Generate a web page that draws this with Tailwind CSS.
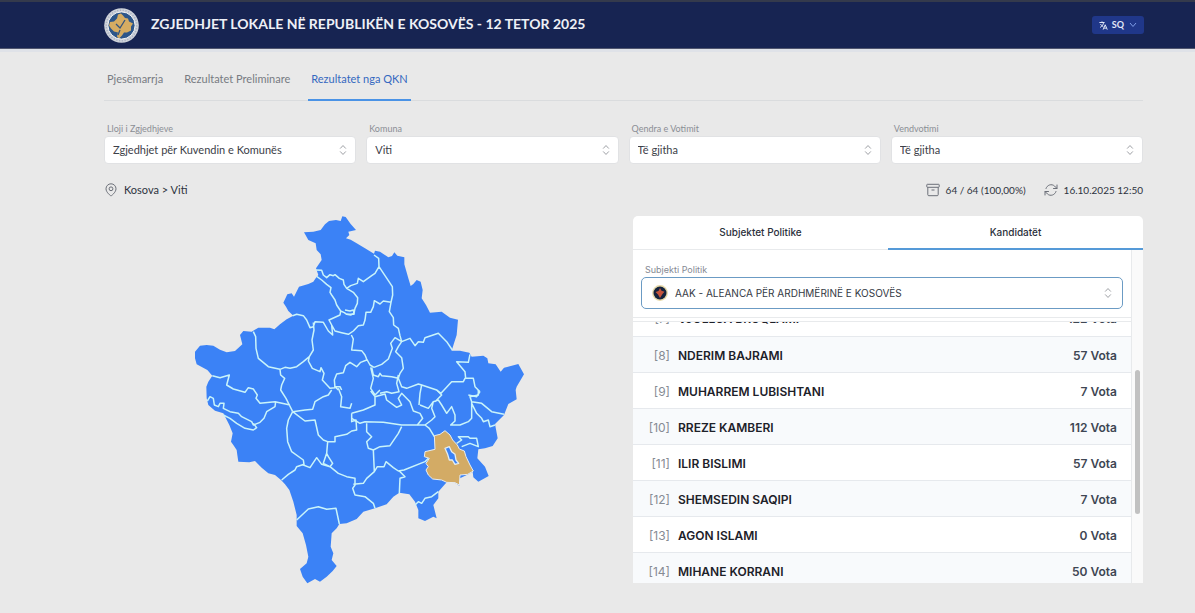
<!DOCTYPE html>
<html lang="sq">
<head>
<meta charset="utf-8">
<meta name="viewport" content="width=device-width, initial-scale=1">
<title>Zgjedhjet Lokale 2025</title>
<script src="https://cdn.jsdelivr.net/npm/@tailwindcss/browser@4"></script>
</head>
<body class="min-h-screen bg-[#e9e9e9] font-[Lato,sans-serif] text-[#2d3340]">
<svg class="hidden" aria-hidden="true">
  <symbol id="updown" viewBox="0 0 10 14"><path d="M2 5l3-3.200L8 5M2 9l3 3.200L8 9" fill="none" stroke="currentColor" stroke-linecap="round" stroke-linejoin="round"/></symbol>
</svg>
<header class="flex h-12 items-center border-t-2 border-[#343a4c] bg-[#172452] pr-[51px] pl-[104px] shadow-[0_1px_0_#50566f,0_4px_0_#dfe2e8]">
  <svg class="size-[35px] shrink-0" viewBox="0 0 35 35" aria-hidden="true">
    <circle cx="17.500" cy="17.500" r="17.300" fill="#cfd3da"/>
    <circle cx="17.500" cy="17.500" r="15.300" fill="none" stroke="#a9b0c2" stroke-width="1.500" stroke-dasharray="1.200 1.600"/>
    <circle cx="17.500" cy="17.500" r="13.600" fill="#2d568a" stroke="#f1f2f4"/>
    <path d="M6 14l4-.5 3-3 1-4 3-1 2 2 2 2.500 3 .5 1 3 4 2-2 3 0 4-4 2-3 0-2 3-3 3-2-2 1-4-4-1-3-3-2-3z" fill="#d6ac62"/>
    <path d="M12 16l4 4L21 12M16 22l-2 5" fill="none" stroke="#34537c" stroke-width="1.300"/>
  </svg>
  <h1 class="ml-3 pb-[3px] text-[14px] font-bold whitespace-nowrap text-[#eef0f6]">ZGJEDHJET LOKALE NË REPUBLIKËN E KOSOVËS - 12 TETOR 2025</h1>
  <button type="button" class="ml-auto flex h-[18px] items-center rounded-[3px] bg-[#203789] px-[7px] text-[9px] font-bold text-[#e3e8f8]">
    <svg class="mr-1 size-[9px]" viewBox="0 0 24 24" fill="none" stroke="currentColor" stroke-width="2.600" aria-hidden="true"><path d="M1 4h14M8 1v3M3 17C9 14 12 9 12 4M4 8c2 4 5 6 8 8M11 23l5.500-13L22 23M13 19h7"/></svg>
    SQ
    <svg class="ml-[5px] h-[6px] w-[8px]" viewBox="0 0 8 6" fill="none" stroke="#7f9ee8" aria-hidden="true"><path d="M1 1l3 3.500L7 1"/></svg>
  </button>
</header>

<main class="pr-[52px] pl-[104px]">
  <nav class="flex h-[53px] items-stretch gap-[15px] border-b border-[#dadcde] text-[11px] text-[#777b82]">
    <a href="#" class="flex items-center px-[3px] pt-[10px]">Pjesëmarrja</a>
    <a href="#" class="flex items-center px-[3px] pt-[10px]">Rezultatet Preliminare</a>
    <a href="#" aria-current="page" class="-mb-px flex items-center border-b-2 border-[#4a93e6] px-[3px] pt-[11px] text-[#3468c0]">Rezultatet nga QKN</a>
  </nav>

  <form class="mt-[21px] grid grid-cols-4 gap-[10px]">
    <div>
      <label for="lloji" class="block pl-[3px] text-[9px] leading-[14px] text-[#8b8e95]">Lloji i Zgjedhjeve</label>
      <div class="relative">
        <select id="lloji" class="block h-7 w-full appearance-none rounded border border-[#e1e2e4] bg-white px-2 text-[11px] text-[#3c4048]"><option>Zgjedhjet për Kuvendin e Komunës</option></select>
        <svg class="pointer-events-none absolute top-2 right-2 h-3 w-[10px] text-[#8d9096]"><use href="#updown"/></svg>
      </div>
    </div>
    <div>
      <label for="komuna" class="block pl-[3px] text-[9px] leading-[14px] text-[#8b8e95]">Komuna</label>
      <div class="relative">
        <select id="komuna" class="block h-7 w-full appearance-none rounded border border-[#e1e2e4] bg-white px-2 text-[11px] text-[#3c4048]"><option>Viti</option></select>
        <svg class="pointer-events-none absolute top-2 right-2 h-3 w-[10px] text-[#8d9096]"><use href="#updown"/></svg>
      </div>
    </div>
    <div>
      <label for="qendra" class="block pl-[3px] text-[9px] leading-[14px] text-[#8b8e95]">Qendra e Votimit</label>
      <div class="relative">
        <select id="qendra" class="block h-7 w-full appearance-none rounded border border-[#e1e2e4] bg-white px-2 text-[11px] text-[#3c4048]"><option>Të gjitha</option></select>
        <svg class="pointer-events-none absolute top-2 right-2 h-3 w-[10px] text-[#8d9096]"><use href="#updown"/></svg>
      </div>
    </div>
    <div>
      <label for="vend" class="block pl-[3px] text-[9px] leading-[14px] text-[#8b8e95]">Vendvotimi</label>
      <div class="relative">
        <select id="vend" class="block h-7 w-full appearance-none rounded border border-[#e1e2e4] bg-white px-2 text-[11px] text-[#3c4048]"><option>Të gjitha</option></select>
        <svg class="pointer-events-none absolute top-2 right-2 h-3 w-[10px] text-[#8d9096]"><use href="#updown"/></svg>
      </div>
    </div>
  </form>

  <div class="mt-[17px] flex h-[18px] items-center text-[10px]">
    <svg class="mr-[6px] size-[14px] text-[#6b6f78]" viewBox="0 0 14 14" fill="none" stroke="currentColor" aria-hidden="true"><path d="M7 13S2 9.500 2 5.800a5 5 0 0 1 10 0C12 9.500 7 13 7 13z"/><circle cx="7" cy="5.800" r="1.900"/></svg>
    <span class="text-[11px]">Kosova &gt; Viti</span>
    <svg class="mr-[6px] ml-auto size-[14px] text-[#6b6f78]" viewBox="0 0 14 14" fill="none" stroke="currentColor" aria-hidden="true"><rect x=".8" y="1.300" width="12.400" height="3" rx=".6"/><path d="M1.800 4.300v7.400q0 1 1 1h8.400q1 0 1-1V4.300M5.500 7h3"/></svg>
    <span>64 / 64 (100,00%)</span>
    <svg class="mr-[6px] ml-[18px] size-[14px] text-[#6b6f78]" viewBox="0 0 14 14" fill="none" stroke="currentColor" stroke-linecap="round" stroke-linejoin="round" aria-hidden="true"><path d="M13 2v3.500H9.500M1 12V8.500h3.500M2 5.500A5.200 5.200 0 0 1 10.500 3L13 5.500M12 8.500A5.200 5.200 0 0 1 3.500 11L1 8.500"/></svg>
    <span>16.10.2025 12:50</span>
  </div>

  <div class="mt-[17px] grid grid-cols-2 items-start gap-[19px]">
    <div class="flex justify-center">
      <svg class="h-[371px] w-[334px]" viewBox="36 33 1002 1113" role="img" aria-label="Harta e komunave të Kosovës" stroke-linejoin="round">
        <path fill="#3b82f6" d="M372 82L400 80 422 75 435 58 447 48 468 45 482 48 487 34 497 36 512 57 528 75 505 80 508 90 498 100 512 104 530 115 555 130 582 146 585 137 600 140 625 157 636 153 643 142 652 152 673 157 673 178 685 220 692 243 700 237 710 225 722 230 728 255 725 280 738 300 750 323 785 320 810 338 834 344 830 390 822 415 815 437 840 437 868 443 875 455 910 452 922 460 925 475 947 478 962 500 972 488 1015 477 1032 508 1010 545 1007 555 1010 583 985 597 972 630 945 657 953 700 938 723 915 730 895 733 892 760 915 785 926 813 895 830 880 817 878 800 865 808 840 820 838 842 825 833 800 832 775 860 775 880 760 900 770 940 760 935 735 948 715 940 715 915 705 890 688 868 658 863 640 875 620 898 585 910 550 920 530 942 500 955 478 957 470 970 455 985 452 1025 460 1045 455 1065 470 1083 458 1098 440 1115 420 1130 405 1122 382 1135 368 1115 360 1092 380 1075 385 1055 378 1020 368 985 350 963 350 930 340 890 328 855 315 838 303 825 285 810 265 805 245 788 225 768 208 772 175 770 172 750 170 735 160 720 153 710 158 685 148 660 130 625 105 617 85 600 80 580 79 545 85 530 97 512 82 495 50 478 45 460 45 440 60 422 80 420 100 422 120 434 140 442 165 438 187 418 180 390 190 378 215 380 235 368 270 368 283 373 300 358 320 343 340 332 325 318 318 305 310 293 322 268 335 265 342 275 357 245 385 237 400 230 408 218 415 210 408 190 425 165 422 148 410 135 407 115 385 105z"/>
        <g fill="none" stroke="#c9f4fa" stroke-width="4.500">
          <path d="M408 195L425 196 430 210 440 218 450 209 460 212 465 209 478 220 490 225 492 238 500 250 520 262 533 278 532 295 525 310 522 325 512 330 500 328 493 323 482 318 470 300 465 285 455 270 450 262 453 248 440 238 425 225 410 214M500 250L512 242 532 235 535 220 550 230 575 212 585 205 597 185 596 160 582 150M597 185L617 215 637 245 638 270 633 292 628 320 640 338 641 360 655 370 660 392 665 410M633 292L610 288 600 297 583 287 580 305 572 322 558 322 555 345 550 360 535 362 520 378 505 388 485 383 465 378 455 360 447 345 480 330 482 318M514 390L520 402 515 435 545 437 555 450 560 462 570 480 582 487M455 360L458 390 445 378 430 352 405 350 400 365 390 368 380 345 370 332 350 328 338 332M400 352L402 375 396 405 400 435 388 455 370 470 350 485 330 490 315 487 300 493 265 485 235 460 228 430 227 395 220 380M388 455L385 468 397 490 420 500 423 488 432 505 427 525 450 550 465 548 463 525 470 507 490 503 497 482 510 472 530 485 542 472 560 465M300 493L302 510 314 520 305 540 302 555 318 580 328 600 338 620M97 512L120 518 148 510 140 540 160 552 195 562 205 548 220 552 232 570 228 580 240 595 285 590 330 600M582 487L605 478 625 462 637 430 632 415 645 398 665 410 690 400 705 422 715 410 730 412 735 398 775 385 800 410 817 435M665 410L655 425 647 440 665 458 670 490 660 505 655 520 635 515 605 512 600 505 595 515 580 510 575 487M572 487L580 520 572 550 585 570 600 555M655 510L650 535 657 560 635 565 620 560 600 565M655 520L665 545 680 550 715 537 725 540 770 555 783 565 815 530 850 530 855 520 880 520 885 545 900 560M870 448L865 472 830 470 855 500 857 520"/>
          <path d="M82 588L90 575 100 580 103 600 115 605 120 595 132 595 130 610 150 620 175 625 185 635 215 650 220 660 240 652 252 640 260 620 285 605 287 590M130 630L150 640 170 655 195 670 220 675 230 668 220 655M338 620L325 645 320 670 323 710 335 740 370 765 372 778 350 785 345 795 325 808 305 825M338 620L375 615 398 613 405 590 430 575 445 570 455 555M338 620L375 648 405 645 415 690 430 705 443 710 440 745 430 775 450 785 458 775 445 755 440 745M443 710L465 710 465 695 500 688 515 678 530 675 528 645 515 650 515 625M475 550L485 575 482 605 510 610 515 595M515 625L550 615 585 600 585 575 572 558M585 575L615 567 620 585 650 607 665 600 655 580 665 565 690 590 700 618 720 625 728 640 712 660M370 780L390 788 410 758 425 778 450 785 475 805 500 815 525 820 525 840 518 850 525 870 555 875 580 895 585 910M350 945L385 912 415 905 440 913 468 910 478 957"/>
          <path d="M515 640L540 655 555 650 610 652 665 660 735 660 748 670 763 695M665 665L655 685 630 722 600 725 580 735 565 730 560 710 575 695 560 680 560 655M580 735L583 800 560 820 550 835 520 838M583 800L592 785 612 785 618 770 640 788 655 798 672 795 735 770 745 760M658 798L675 815 660 820 658 865M735 660L755 645 765 635 755 610 760 590 775 585 785 600 800 625 815 605 825 630 825 648 812 660 840 660 865 650 875 640 875 590 905 595 935 620 972 628M765 590L785 570 770 555M720 600L745 610 760 590M875 590L870 575 895 570 895 555M875 595L890 625 905 640 910 650 925 645 930 665 945 660M830 715L845 705 835 695 865 695 870 700 890 700 895 725 870 715 845 725M705 900L715 890 725 895 735 880 755 875 768 865 775 860"/>
          <path d="M475 555L465 545 480 545 485 555M495 315L510 318 520 315 522 328 500 328M725 540L720 565 717 600M900 560L890 575 865 570"/>
        </g>
        <path fill="#d3ab65" stroke="#e9edef" stroke-width="3" d="M763 692L780 688 795 677 810 690 818 705 832 720 838 732 853 738 858 755 870 780 880 798 863 808 840 810 838 840 825 833 800 832 785 825 758 822 745 810 738 795 745 785 738 775 748 760 733 755 735 740 765 733z"/>
        <path fill="#3b82f6" stroke="#e4eef2" stroke-width="4" d="M795 730L808 725 815 740 825 748 828 765 836 775 825 778 817 765 808 765 803 748z"/>
      </svg>
    </div>

    <section class="overflow-hidden rounded-t-[5px] bg-white font-[Inter,sans-serif]">
      <div role="tablist" class="grid grid-cols-2 text-[10px] font-medium text-[#2b303b]">
        <button type="button" role="tab" aria-selected="false" class="h-[34px] border-b border-[#e8eaec]">Subjektet Politike</button>
        <button type="button" role="tab" aria-selected="true" class="h-[34px] border-b-2 border-[#559ad8]">Kandidatët</button>
      </div>
      <div class="flex">
        <div class="min-w-0 flex-1">
          <div class="border-b border-[#e8eaec] pt-[13px] pr-[8px] pb-[8px] pl-[8px]">
            <label for="subjekti" class="block pl-[4px] text-[9px] leading-[14px] text-[#868a93]">Subjekti Politik</label>
            <div class="relative">
              <select id="subjekti" class="block h-8 w-full appearance-none rounded-[5px] border border-[#6b9bc4] bg-white pl-[33px] text-[10px] text-[#343943]"><option>AAK - ALEANCA PËR ARDHMËRINË E KOSOVËS</option></select>
              <svg class="pointer-events-none absolute top-2 left-[11px] size-4" viewBox="0 0 16 16" aria-hidden="true"><circle cx="8" cy="8" r="7.900" fill="#e7d9a8"/><circle cx="8" cy="8" r="6.500" fill="#14233d"/><path d="M8 3l1.500 2.800 3 1L10.500 9 8 13 6 9.500 3.500 7l3-1z" fill="#c4543c"/></svg>
              <svg class="pointer-events-none absolute top-[10px] right-[10px] h-3 w-[10px] text-[#8d9096]"><use href="#updown"/></svg>
            </div>
          </div>
          <div class="mt-[3px] h-[262px] overflow-hidden border-t border-[#e8eaec]">
            <table class="-mt-[22px] w-full text-[12px] font-semibold text-[#1d2129]">
              <tbody class="[&_td]:pt-[3px] [&_td:first-child]:w-[37px] [&_td:first-child]:text-right [&_td:first-child]:font-normal [&_td:first-child]:text-[#868b94] [&_td:last-child]:pr-[14px] [&_td:last-child]:text-right [&_td:last-child]:text-[#3e4653] [&_td:nth-child(2)]:pl-[8px] [&_tr]:h-9 [&_tr]:border-b [&_tr]:border-[#e6e9ed] [&_tr:nth-child(even)]:bg-[#f8fafc]">
                <tr><td>[7]</td><td>VJOLLCA BRUQLAMI</td><td>122 Vota</td></tr>
                <tr><td>[8]</td><td>NDERIM BAJRAMI</td><td>57 Vota</td></tr>
                <tr><td>[9]</td><td>MUHARREM LUBISHTANI</td><td>7 Vota</td></tr>
                <tr><td>[10]</td><td>RREZE KAMBERI</td><td>112 Vota</td></tr>
                <tr><td>[11]</td><td>ILIR BISLIMI</td><td>57 Vota</td></tr>
                <tr><td>[12]</td><td>SHEMSEDIN SAQIPI</td><td>7 Vota</td></tr>
                <tr><td>[13]</td><td>AGON ISLAMI</td><td>0 Vota</td></tr>
                <tr><td>[14]</td><td>MIHANE KORRANI</td><td>50 Vota</td></tr>
              </tbody>
            </table>
          </div>
        </div>
        <div class="w-[12px] border-l border-[#e8eaec] bg-[#fafafa] px-[3px] pt-[120px]">
          <div class="h-[144px] rounded-full bg-[#c1c1c1]"></div>
        </div>
      </div>
    </section>
  </div>
</main>
</body>
</html>
